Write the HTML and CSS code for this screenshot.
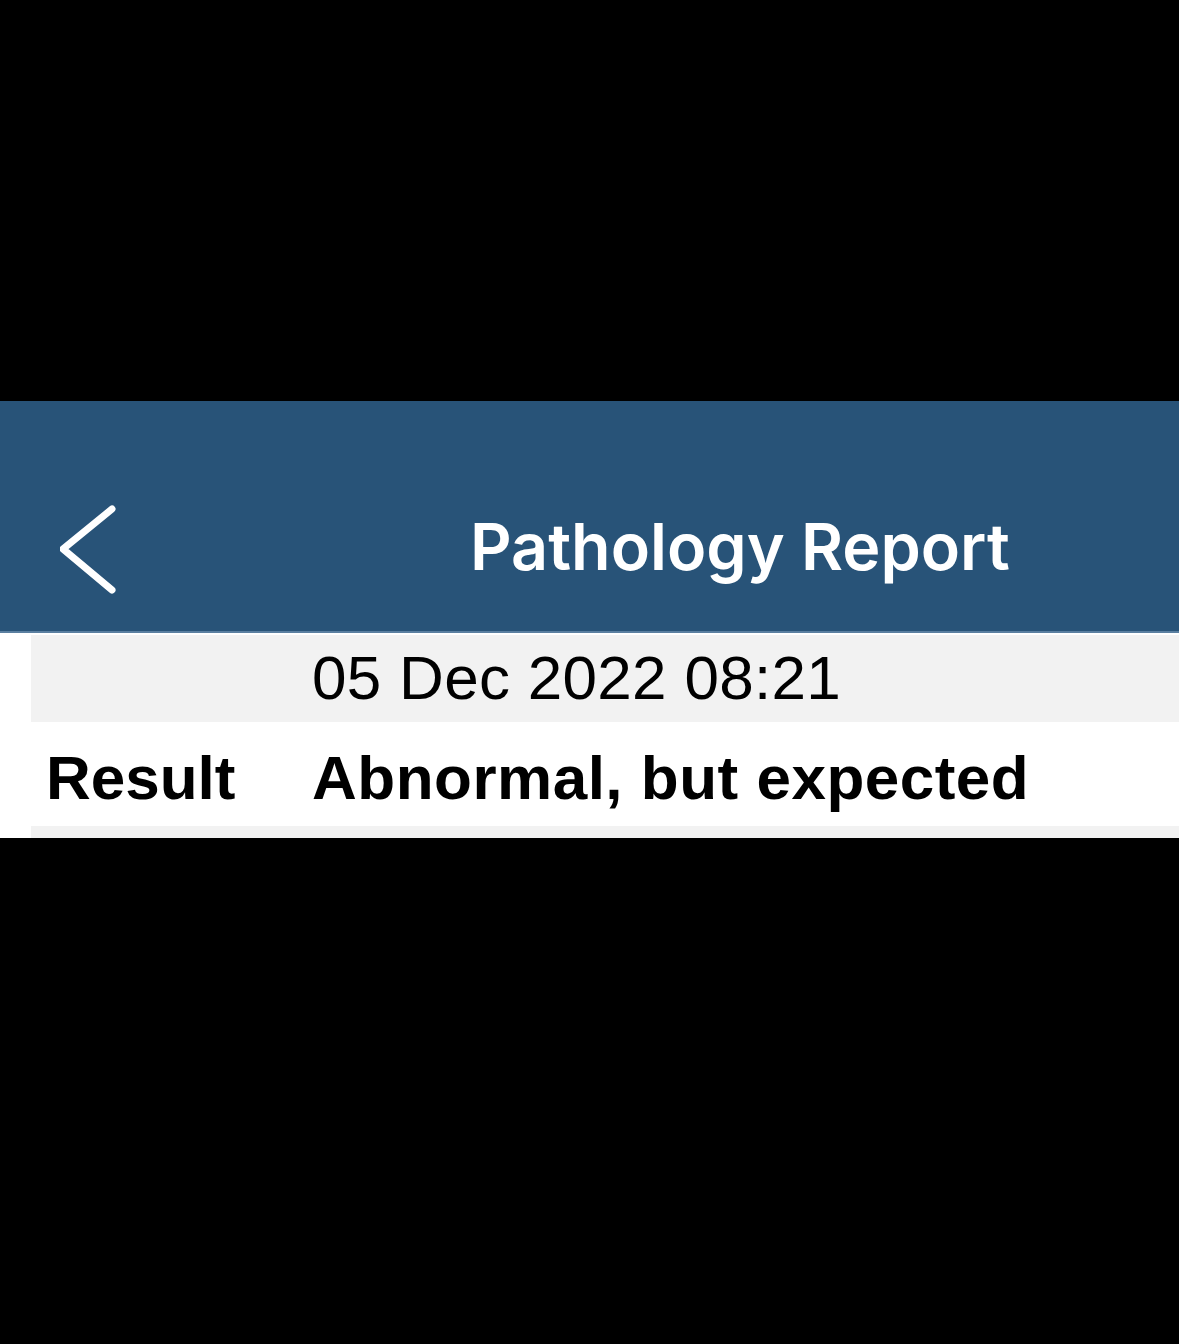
FILE: index.html
```html
<!DOCTYPE html>
<html>
<head>
<meta charset="utf-8">
<link rel="stylesheet" href="styles.css">
</head>
<body>
<div class="screen">
  <div class="top-black"></div>
  <header class="navbar">
    <div class="back">
      <svg width="60" height="96" viewBox="0 0 60 96" class="chev">
        <polyline points="52,7 3,47 52,88" fill="none" stroke="#ffffff" stroke-width="7" stroke-linecap="round" stroke-linejoin="round"/>
      </svg>
    </div>
    <h1 class="title">Pathology Report</h1>
  </header>
  <section class="content">
    <div class="row row-date">
      <div class="label"></div>
      <div class="value date">05 Dec 2022 08:21</div>
    </div>
    <div class="row row-result">
      <div class="label">Result</div>
      <div class="value strong">Abnormal, but expected</div>
    </div>
    <div class="row row-next"></div>
  </section>
  <div class="bottom-black"></div>
</div>
</body>
</html>
```
FILE: styles.css
```css
html, body {
  margin: 0;
  padding: 0;
  background: #000;
}
.screen {
  width: 1179px;
  height: 1344px;
  display: flex;
  flex-direction: column;
  background: #000;
  font-family: "Liberation Sans", Arial, sans-serif;
}
.top-black {
  height: 401px;
  flex: none;
}
.navbar {
  height: 232px;
  flex: none;
  background: #285378;
  border-bottom: 2px solid #5a7fa0;
  box-sizing: border-box;
  display: flex;
  align-items: flex-start;
}
.back {
  padding-left: 60px;
  padding-top: 101px;
  width: 60px;
}
.chev { display: block; }
.title {
  margin: 0;
  padding-left: 350px;
  padding-top: 111px;
  color: #fff;
  font-weight: 600;
  font-size: 64.6px;
  line-height: 70px;
  letter-spacing: 0px;
  font-family: Inter, "Liberation Sans", Arial, sans-serif;
}
.content {
  height: 205px;
  flex: none;
  background: #fff;
  display: flex;
  flex-direction: column;
}
.row {
  margin-left: 31px;
  display: flex;
  align-items: flex-start;
}
.row-date {
  height: 87px;
  margin-top: 2px;
  background: #f2f2f2;
}
.row-result {
  height: 104px;
  background: #fff;
}
.row-next {
  height: 12px;
  background: #f2f2f2;
}
.label {
  width: 281px;
  padding-left: 15px;
  box-sizing: border-box;
  font-weight: 700;
  font-size: 62px;
  color: #000;
}
.value {
  color: #000;
  font-size: 62px;
}
.date {
  padding-top: 8px;
  line-height: 70px;
  letter-spacing: 0.3px;
}
.row-result .label, .strong {
  padding-top: 21px;
  line-height: 70px;
}
.strong {
  font-weight: 700;
  letter-spacing: 0.5px;
}
.bottom-black {
  flex: 1;
}
```
